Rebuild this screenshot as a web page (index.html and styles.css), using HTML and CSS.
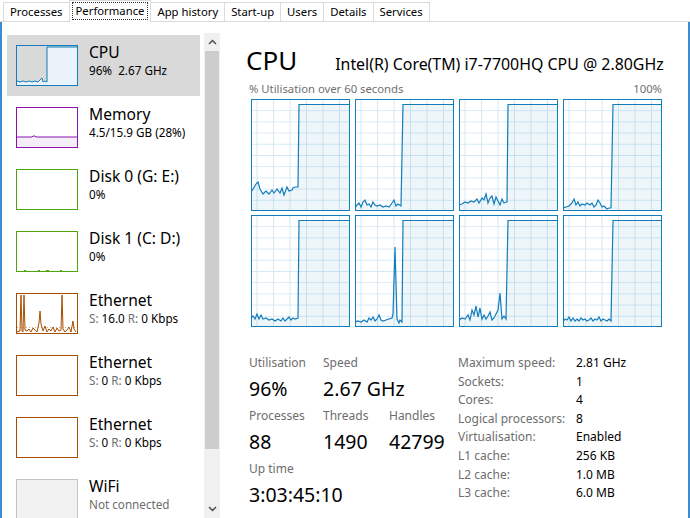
FILE: index.html
```html
<!DOCTYPE html>
<html lang="en">
<head>
    <meta charset="UTF-8">
    <title>Task Manager - Performance</title>
    <link rel="stylesheet" href="styles.css">
</head>
<body>
    <svg class="defs" width="0" height="0">
        <defs>
            <pattern id="grid" width="16.5" height="11.2" x="5.5" y="0" patternUnits="userSpaceOnUse">
                <path d="M0.5 0 V11.2 M0 0.5 H16.5" stroke="#d6e8f3" stroke-width="1" fill="none"/>
            </pattern>
        </defs>
    </svg>

    <div class="window">
        <div class="tabs">
            <div class="tab">Processes</div>
            <div class="tab active"><span>Performance</span></div>
            <div class="tab">App history</div>
            <div class="tab">Start-up</div>
            <div class="tab">Users</div>
            <div class="tab">Details</div>
            <div class="tab">Services</div>
        </div>

        <div class="content">
            <aside class="sidebar">
                <div class="list">
                    <div class="item selected">
                        <svg class="thumb" width="62" height="41">
                            <polygon class="cpu-fill" points="1,36 4,37 7,36 10,37 13,36 16,37 19,36 22,37 24,35 26,33 27,37 29,36 31,37 31,2 61,2 61,40 1,40"/>
                            <polyline class="cpu-line" points="1,36 4,37 7,36 10,37 13,36 16,37 19,36 22,37 24,35 26,33 27,37 29,36 31,37 31,2 61,2"/>
                            <rect x="0.5" y="0.5" width="61" height="40" fill="none" stroke="#117dbb"/>
                        </svg>
                        <div class="info">
                            <div class="name">CPU</div>
                            <div class="sub">96%&nbsp; 2.67 GHz</div>
                        </div>
                    </div>
                    <div class="item">
                        <svg class="thumb" width="62" height="41">
                            <polygon points="1,30 16,30 17,29 19,29 20,30 61,30 61,40 1,40" fill="#f3eef7"/>
                            <polyline points="1,30 16,30 17,29 19,29 20,30 61,30" fill="none" stroke="#8b12ae" stroke-width="1"/>
                            <rect x="0.5" y="0.5" width="61" height="40" fill="none" stroke="#8b12ae"/>
                        </svg>
                        <div class="info">
                            <div class="name">Memory</div>
                            <div class="sub">4.5/15.9 GB (28%)</div>
                        </div>
                    </div>
                    <div class="item">
                        <svg class="thumb" width="62" height="41">
                            <rect x="0.5" y="0.5" width="61" height="40" fill="#fff" stroke="#4da60c"/>
                        </svg>
                        <div class="info">
                            <div class="name">Disk 0 (G: E:)</div>
                            <div class="sub">0%</div>
                        </div>
                    </div>
                    <div class="item">
                        <svg class="thumb" width="62" height="41">
                            <rect x="0.5" y="0.5" width="61" height="40" fill="#fff" stroke="#4da60c"/>
                            <path d="M8 39.5 H10 M22 39.5 H24 M30 39.5 H33 M44 39.5 H46" stroke="#4da60c" stroke-width="1"/>
                        </svg>
                        <div class="info">
                            <div class="name">Disk 1 (C: D:)</div>
                            <div class="sub">0%</div>
                        </div>
                    </div>
                    <div class="item">
                        <svg class="thumb" width="62" height="41">
                            <rect x="0.5" y="0.5" width="61" height="40" fill="#fff" stroke="#a74f01"/>
                            <line x1="1" y1="34.5" x2="61" y2="34.5" stroke="#d9a680" stroke-dasharray="1 2"/>
                            <polyline points="1,39 4,38 5,2 6,38 7,39 8,2 9,37 11,38 13,36 15,39 17,35 19,37 21,39 23,30 24,18 25,31 27,38 29,33 31,39 33,36 35,38 37,34 39,39 41,35 43,38 45,37 46,2 47,36 49,39 51,37 53,34 55,39 57,28 58,36 60,39" fill="none" stroke="#a74f01" stroke-width="1"/>
                        </svg>
                        <div class="info">
                            <div class="name">Ethernet</div>
                            <div class="sub"><span class="dim">S:</span> 16.0 <span class="dim">R:</span> 0 Kbps</div>
                        </div>
                    </div>
                    <div class="item">
                        <svg class="thumb" width="62" height="41">
                            <rect x="0.5" y="0.5" width="61" height="40" fill="#fff" stroke="#a74f01"/>
                        </svg>
                        <div class="info">
                            <div class="name">Ethernet</div>
                            <div class="sub"><span class="dim">S:</span> 0 <span class="dim">R:</span> 0 Kbps</div>
                        </div>
                    </div>
                    <div class="item">
                        <svg class="thumb" width="62" height="41">
                            <rect x="0.5" y="0.5" width="61" height="40" fill="#fff" stroke="#a74f01"/>
                        </svg>
                        <div class="info">
                            <div class="name">Ethernet</div>
                            <div class="sub"><span class="dim">S:</span> 0 <span class="dim">R:</span> 0 Kbps</div>
                        </div>
                    </div>
                    <div class="item">
                        <svg class="thumb" width="62" height="41">
                            <rect x="0.5" y="0.5" width="61" height="40" fill="#f2f2f2" stroke="#c4c4c4"/>
                        </svg>
                        <div class="info">
                            <div class="name">WiFi</div>
                            <div class="sub dim">Not connected</div>
                        </div>
                    </div>
                </div>

                <div class="scrollbar">
                    <div class="sb-btn">
                        <svg width="9" height="6"><polyline points="1,5 4.5,1.5 8,5" fill="none" stroke="#505050" stroke-width="1.5"/></svg>
                    </div>
                    <div class="sb-thumb"></div>
                    <div class="sb-track"></div>
                    <div class="sb-btn">
                        <svg width="9" height="6"><polyline points="1,1 4.5,4.5 8,1" fill="none" stroke="#505050" stroke-width="1.5"/></svg>
                    </div>
                </div>
            </aside>

            <main class="detail">
                <div class="head">
                    <h1>CPU</h1>
                    <span class="model">Intel(R) Core(TM) i7-7700HQ CPU @ 2.80GHz</span>
                </div>
                <div class="graph-label">
                    <span>% Utilisation over 60 seconds</span>
                    <span>100%</span>
                </div>

                <div class="cores">
                    <svg class="core" width="99" height="112">
                        <rect width="99" height="112" fill="url(#grid)"/>
                        <polygon class="core-fill" points="0,93 2,90 5,85 7,83 9,90 12,95 15,92 18,95 21,91 23,94 26,90 29,94 31,89 33,96 36,88 38,92 41,91 42,89 44,88 47,88 48,5.5 99,5.5 99,112 0,112"/>
                        <polyline class="core-line" points="0,93 2,90 5,85 7,83 9,90 12,95 15,92 18,95 21,91 23,94 26,90 29,94 31,89 33,96 36,88 38,92 41,91 42,89 44,88 47,88 48,5.5 99,5.5"/>
                        <rect class="core-border" x="0.5" y="0.5" width="98" height="111"/>
                    </svg>
                    <svg class="core" width="99" height="112">
                        <rect width="99" height="112" fill="url(#grid)"/>
                        <polygon class="core-fill" points="0,109 2,106 4,104 6,108 8,103 10,101 12,106 14,105 16,108 18,103 20,106 22,107 25,106 28,108 31,107 34,108 37,104 39,101 41,107 43,105 46,107 48,5.5 99,5.5 99,112 0,112"/>
                        <polyline class="core-line" points="0,109 2,106 4,104 6,108 8,103 10,101 12,106 14,105 16,108 18,103 20,106 22,107 25,106 28,108 31,107 34,108 37,104 39,101 41,107 43,105 46,107 48,5.5 99,5.5"/>
                        <rect class="core-border" x="0.5" y="0.5" width="98" height="111"/>
                    </svg>
                    <svg class="core" width="99" height="112">
                        <rect width="99" height="112" fill="url(#grid)"/>
                        <polygon class="core-fill" points="0,106 3,105 6,103 9,104 12,102 15,103 18,100 20,104 23,99 25,101 27,95 29,104 31,99 33,97 35,105 37,98 39,102 41,106 43,100 45,104 47,103 48,103 49,5.5 99,5.5 99,112 0,112"/>
                        <polyline class="core-line" points="0,106 3,105 6,103 9,104 12,102 15,103 18,100 20,104 23,99 25,101 27,95 29,104 31,99 33,97 35,105 37,98 39,102 41,106 43,100 45,104 47,103 48,103 49,5.5 99,5.5"/>
                        <rect class="core-border" x="0.5" y="0.5" width="98" height="111"/>
                    </svg>
                    <svg class="core" width="99" height="112">
                        <rect width="99" height="112" fill="url(#grid)"/>
                        <polygon class="core-fill" points="0,109 3,108 6,107 9,104 11,100 13,106 15,103 17,107 19,105 22,106 24,104 27,106 29,104 31,108 33,106 35,101 37,104 39,108 41,107 44,110 46,109 48,109 50,5.5 99,5.5 99,112 0,112"/>
                        <polyline class="core-line" points="0,109 3,108 6,107 9,104 11,100 13,106 15,103 17,107 19,105 22,106 24,104 27,106 29,104 31,108 33,106 35,101 37,104 39,108 41,107 44,110 46,109 48,109 50,5.5 99,5.5"/>
                        <rect class="core-border" x="0.5" y="0.5" width="98" height="111"/>
                    </svg>
                    <svg class="core" width="99" height="112">
                        <rect width="99" height="112" fill="url(#grid)"/>
                        <polygon class="core-fill" points="0,103 2,101 4,104 6,99 8,104 10,100 12,104 15,103 18,105 21,104 24,106 27,104 30,106 32,103 34,106 36,104 38,102 40,105 42,103 44,104 47,103 48,5.5 99,5.5 99,112 0,112"/>
                        <polyline class="core-line" points="0,103 2,101 4,104 6,99 8,104 10,100 12,104 15,103 18,105 21,104 24,106 27,104 30,106 32,103 34,106 36,104 38,102 40,105 42,103 44,104 47,103 48,5.5 99,5.5"/>
                        <rect class="core-border" x="0.5" y="0.5" width="98" height="111"/>
                    </svg>
                    <svg class="core" width="99" height="112">
                        <rect width="99" height="112" fill="url(#grid)"/>
                        <polygon class="core-fill" points="0,107 3,106 6,107 9,105 12,107 14,103 16,105 18,102 20,106 22,104 24,100 26,105 28,106 31,105 34,104 37,103 38,99 40,32 42,104 44,108 45,105 47,107 48,5.5 99,5.5 99,112 0,112"/>
                        <polyline class="core-line" points="0,107 3,106 6,107 9,105 12,107 14,103 16,105 18,102 20,106 22,104 24,100 26,105 28,106 31,105 34,104 37,103 38,99 40,32 42,104 44,108 45,105 47,107 48,5.5 99,5.5"/>
                        <rect class="core-border" x="0.5" y="0.5" width="98" height="111"/>
                    </svg>
                    <svg class="core" width="99" height="112">
                        <rect width="99" height="112" fill="url(#grid)"/>
                        <polygon class="core-fill" points="0,105 3,103 6,104 9,100 11,105 13,95 15,100 17,91 19,102 21,93 23,104 25,100 27,104 29,101 31,97 33,105 35,103 37,99 39,95 41,78 43,104 45,101 47,104 49,5.5 99,5.5 99,112 0,112"/>
                        <polyline class="core-line" points="0,105 3,103 6,104 9,100 11,105 13,95 15,100 17,91 19,102 21,93 23,104 25,100 27,104 29,101 31,97 33,105 35,103 37,99 39,95 41,78 43,104 45,101 47,104 49,5.5 99,5.5"/>
                        <rect class="core-border" x="0.5" y="0.5" width="98" height="111"/>
                    </svg>
                    <svg class="core" width="99" height="112">
                        <rect width="99" height="112" fill="url(#grid)"/>
                        <polygon class="core-fill" points="0,107 2,104 4,105 6,102 8,106 10,103 12,106 14,104 16,106 18,103 20,105 22,104 24,106 26,105 28,103 30,106 32,104 34,105 36,102 38,106 40,104 42,105 44,106 46,104 48,106 50,5.5 99,5.5 99,112 0,112"/>
                        <polyline class="core-line" points="0,107 2,104 4,105 6,102 8,106 10,103 12,106 14,104 16,106 18,103 20,105 22,104 24,106 26,105 28,103 30,106 32,104 34,105 36,102 38,106 40,104 42,105 44,106 46,104 48,106 50,5.5 99,5.5"/>
                        <rect class="core-border" x="0.5" y="0.5" width="98" height="111"/>
                    </svg>
                </div>

                <div class="stats">
                    <div class="live">
                        <div class="stat">
                            <div class="label">Utilisation</div>
                            <div class="value">96%</div>
                        </div>
                        <div class="stat wide">
                            <div class="label">Speed</div>
                            <div class="value">2.67 GHz</div>
                        </div>
                        <div class="stat">
                            <div class="label">Processes</div>
                            <div class="value">88</div>
                        </div>
                        <div class="stat">
                            <div class="label">Threads</div>
                            <div class="value">1490</div>
                        </div>
                        <div class="stat">
                            <div class="label">Handles</div>
                            <div class="value">42799</div>
                        </div>
                        <div class="stat full">
                            <div class="label">Up time</div>
                            <div class="value">3:03:45:10</div>
                        </div>
                    </div>

                    <div class="specs">
                        <span>Maximum speed:</span><span>2.81 GHz</span>
                        <span>Sockets:</span><span>1</span>
                        <span>Cores:</span><span>4</span>
                        <span>Logical processors:</span><span>8</span>
                        <span>Virtualisation:</span><span>Enabled</span>
                        <span>L1 cache:</span><span>256 KB</span>
                        <span>L2 cache:</span><span>1.0 MB</span>
                        <span>L3 cache:</span><span>6.0 MB</span>
                    </div>
                </div>
            </main>
        </div>
    </div>
</body>
</html>
```

FILE: styles.css
```css
* { box-sizing: border-box; }
body {
    margin: 0;
    font-family: "Noto Sans", "Open Sans", sans-serif;
    background: #fff;
    color: #000;
    overflow: hidden;
}
.defs { position: absolute; }
.window {
    width: 690px;
    height: 518px;
    display: flex;
    flex-direction: column;
    overflow: hidden;
}

/* tab strip */
.tabs {
    height: 22px;
    display: flex;
    align-items: flex-end;
    padding-left: 3px;
    border-bottom: 1px solid #dadada;
    font-size: 11.3px;
}
.tab {
    height: 19px;
    padding: 0 6px;
    line-height: 18px;
    border: 1px solid #dadada;
    border-bottom: none;
    border-right: none;
    color: #000;
    background: #fff;
}
.tab:last-child { border-right: 1px solid #dadada; }
.tab.active {
    height: 22px;
    margin-bottom: -1px;
    padding: 1px 2px 0;
    border-right: 1px solid #dadada;
}
.tab.active + .tab { border-left: none; }
.tab.active span {
    display: block;
    padding: 0 3px;
    line-height: 16px;
    border: 1px dotted #333;
}

.content {
    flex: 1;
    display: flex;
    border-left: 2px solid #3c8bd0;
    border-right: 2px solid #3c8bd0;
    min-height: 0;
}

/* left list */
.sidebar {
    width: 218px;
    display: flex;
    flex-shrink: 0;
}
.list {
    width: 198px;
    padding: 13px 0 0 5px;
}
.item {
    display: flex;
    align-items: flex-start;
    height: 61px;
    margin-bottom: 1px;
    padding: 10px 0 0 9px;
}
.item.selected { background: #d9d9d9; }
.thumb { display: block; flex-shrink: 0; }
.cpu-fill { fill: #eaf3f9; }
.cpu-line { fill: none; stroke: #117dbb; stroke-width: 1; }
.info { margin: -3px 0 0 11px; white-space: nowrap; }
.name { font-size: 15.6px; line-height: 20px; }
.sub { font-size: 11.7px; line-height: 16px; }
.dim { color: #6d6d6d; }

.scrollbar {
    width: 16px;
    margin: 11px 0 0 4px;
    display: flex;
    flex-direction: column;
    background: #f0f0f0;
}
.sb-btn {
    height: 18px;
    display: flex;
    align-items: center;
    justify-content: center;
}
.sb-thumb { height: 398px; background: #cdcdcd; margin: 0 1px; }
.sb-track { flex: 1; }

/* detail */
.detail {
    flex: 1;
    padding: 0 0 0 29px;
}
.head {
    display: flex;
    align-items: baseline;
    height: 55px;
    padding-top: 23px;
    margin-left: -3px;
}
.head h1 {
    margin: 0;
    font-size: 26px;
    font-weight: normal;
    line-height: 30px;
}
.model {
    margin-left: 38px;
    font-size: 15.9px;
}
.graph-label {
    display: flex;
    justify-content: space-between;
    width: 413px;
    font-size: 11.3px;
    line-height: 14px;
    color: #707070;
    margin-top: 5px;
}
.cores {
    display: grid;
    grid-template-columns: repeat(4, 99px);
    grid-auto-rows: 112px;
    gap: 4px 5px;
    margin: 3px 0 0 2px;
}
.core { display: block; }
.core-fill { fill: #117dbb; fill-opacity: 0.07; }
.core-line { fill: none; stroke: #117dbb; stroke-width: 1.2; }
.core-border { fill: none; stroke: #117dbb; stroke-width: 1; }

.stats {
    display: flex;
    margin-top: 28px;
}
.live {
    display: grid;
    grid-template-columns: 74px 66px auto;
    row-gap: 7px;
    width: 209px;
}
.stat.wide { grid-column: span 2; }
.stat.full { grid-column: span 3; }
.label {
    font-size: 12px;
    line-height: 16px;
    color: #6d6d6d;
}
.value {
    margin-top: 6px;
    font-size: 19.5px;
    line-height: 24px;
    color: #000;
}
.specs {
    display: grid;
    grid-template-columns: 118px auto;
    grid-auto-rows: 18.6px;
    font-size: 12px;
    line-height: 16px;
}
.specs span:nth-child(odd) { color: #6d6d6d; }
```
